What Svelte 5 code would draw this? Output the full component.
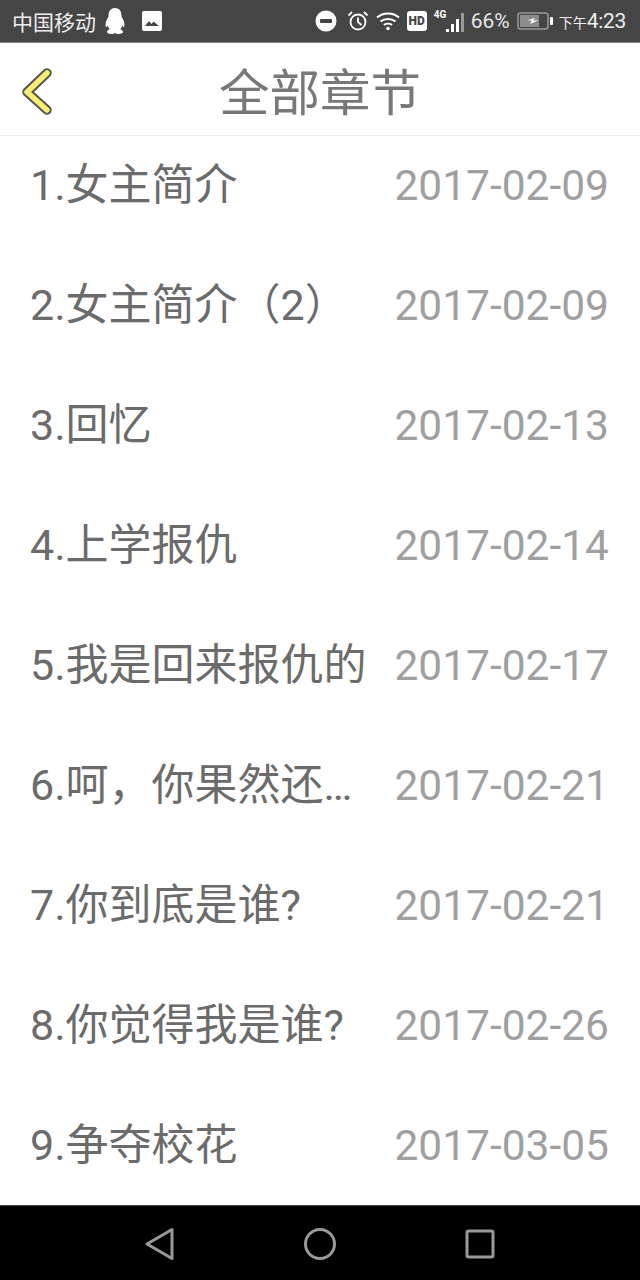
<script>
  const chapters = [
    ['1.女主简介', '2017-02-09'],
    ['2.女主简介（2）', '2017-02-09'],
    ['3.回忆', '2017-02-13'],
    ['4.上学报仇', '2017-02-14'],
    ['5.我是回来报仇的', '2017-02-17'],
    ['6.呵，你果然还…', '2017-02-21'],
    ['7.你到底是谁?', '2017-02-21'],
    ['8.你觉得我是谁?', '2017-02-26'],
    ['9.争夺校花', '2017-03-05']
  ];
</script>

<div class="screen">
  <header class="status">
    <div class="left">
      <span class="carrier">中国移动</span>
      <svg class="qq" width="24" height="28" viewBox="0 0 24 28">
        <path fill="#fff" d="M12 1C7 1 5.500 5 5.500 9.500 4 12 2.500 15 2.500 18c0 1.500.6 2.500 1.200 2 .4-.3.8-1 1-1.500.4 1.500 1 2.800 2 3.800-1.500.6-2.700 1.500-2.700 2.700C4 26.500 7 27 9 27c1.300 0 2.300-.5 3-1 .7.500 1.700 1 3 1 2 0 5-.5 5-2 0-1.200-1.200-2.100-2.700-2.700 1-1 1.600-2.300 2-3.800.2.500.6 1.200 1 1.500.6.500 1.200-.5 1.200-2 0-3-1.500-6-3-8.500C18.500 5 17 1 12 1z"/>
      </svg>
      <svg class="pic" width="22" height="22" viewBox="0 0 22 22">
        <rect x="1" y="1" width="20" height="20" rx="2" fill="#fff"/>
        <path fill="#444" d="M4 16l4-5 2.500 3 2-2.500L18 16z"/>
      </svg>
    </div>
    <div class="right">
      <svg width="22" height="22" viewBox="0 0 22 22"><circle cx="11" cy="11" r="10.500" fill="#fff"/><rect x="5" y="9" width="12" height="4" rx="1" fill="#444"/></svg>
      <svg class="alarm" width="22" height="22" viewBox="0 0 22 22" fill="none" stroke="#fff" stroke-width="1.800"><circle cx="11" cy="12" r="7.500"/><path d="M11 7.500V12l3.500 3M1.500 5.500L5 2M20.500 5.500L17 2"/></svg>
      <svg class="wifi" width="24" height="20" viewBox="0 0 24 20" fill="none" stroke="#fff" stroke-width="2"><path d="M1 6.500c6-5.500 16-5.500 22 0M4.500 10.500c4-3.500 11-3.500 15 0M8 14c2.200-1.700 5.800-1.700 8 0"/><circle cx="12" cy="17.500" r="1.800" fill="#fff" stroke="none"/></svg>
      <span class="hd">HD</span>
      <span class="signal">
        <span class="g4">4G</span>
        <svg width="20" height="21" viewBox="0 0 20 21"><rect x="1" y="17" width="3" height="3" fill="#fff"/><rect x="6" y="12" width="3" height="8" fill="#fff"/><rect x="11" y="7" width="3" height="13" fill="#fff"/><rect x="16" y="1" width="3" height="19" fill="#999"/></svg>
      </span>
      <span class="pct">66%</span>
      <svg class="batt" width="36" height="20" viewBox="0 0 36 20">
        <rect x="1" y="2" width="30" height="16" rx="2.500" fill="none" stroke="#999" stroke-width="1.500"/>
        <rect x="3" y="4" width="19" height="12" fill="#8c8c8c"/>
        <path fill="#fff" d="M10 9.500l8-2.500-2 2.500h5l-8 3.500 2-3.500z"/>
        <rect x="33" y="6" width="3" height="8" rx="1" fill="#fff"/>
      </svg>
      <span class="time"><small>下午</small>4:23</span>
    </div>
  </header>

  <nav class="bar">
    <svg class="back" width="40" height="52" viewBox="0 0 40 52">
      <path d="M30 8L10 27l20 18" fill="none" stroke="#555" stroke-width="9.500" stroke-linecap="round" stroke-linejoin="round"/>
      <path d="M30 8L10 27l20 18" fill="none" stroke="#f8ee70" stroke-width="5.500" stroke-linecap="round" stroke-linejoin="round"/>
    </svg>
    <h1>全部章节</h1>
  </nav>

  <ul class="list">
    {#each chapters as [title, date]}
      <li>
        <span class="name">{title}</span>
        <span class="date">{date}</span>
      </li>
    {/each}
  </ul>

  <footer class="nav">
    <svg width="30" height="34" viewBox="0 0 30 34" fill="none" stroke="#999" stroke-width="3" stroke-linejoin="round"><path d="M27 2.500v29L2 17z"/></svg>
    <svg width="34" height="34" viewBox="0 0 34 34" fill="none" stroke="#999" stroke-width="3"><circle cx="17" cy="17" r="14.500"/></svg>
    <svg width="30" height="30" viewBox="0 0 30 30" fill="none" stroke="#999" stroke-width="3" stroke-linejoin="round"><rect x="2" y="2" width="26" height="26" rx="1.500"/></svg>
  </footer>
</div>

<style>
  :global(body) { margin: 0; background: #fff; }
  .screen {
    width: 640px;
    height: 1280px;
    display: flex;
    flex-direction: column;
    overflow: hidden;
    font-family: Roboto, "Noto Sans CJK SC", sans-serif;
  }
  .status {
    height: 43px;
    flex: none;
    box-sizing: border-box;
    background: #454545;
    border-bottom: 1px solid #888;
    color: #eee;
    display: flex;
    justify-content: space-between;
    align-items: center;
    padding: 0 14px 0 12px;
  }
  .left, .right { display: flex; align-items: center; }
  .carrier { font-size: 21px; margin-right: 7px; }
  .qq { margin-right: 14px; }
  .alarm { margin-left: 10px; }
  .wifi { margin-left: 7px; }
  .hd {
    margin-left: 7px;
    background: #fff;
    color: #454545;
    font-size: 12px;
    font-weight: 900;
    width: 20px;
    height: 20px;
    border-radius: 3px;
    display: flex;
    align-items: center;
    justify-content: center;
  }
  .signal { display: flex; align-items: flex-end; margin-left: 7px; position: relative; width: 31px; height: 24px; justify-content: flex-end; }
  .g4 { position: absolute; left: 0; top: 0; font-size: 10px; font-weight: 700; color: #fff; }
  .pct { font-size: 21px; margin-left: 6px; color: #e6e6e6; }
  .batt { margin-left: 7px; }
  .time { font-size: 21px; letter-spacing: -0.3px; color: #eee; margin-left: 6px; white-space: nowrap; }
  .time small { font-size: 14px; letter-spacing: 0; }
  .bar {
    height: 93px;
    flex: none;
    box-sizing: border-box;
    background: #fff;
    border-bottom: 1px solid #eee;
    position: relative;
    display: flex;
    align-items: center;
    justify-content: center;
  }
  .back { position: absolute; left: 17px; top: 22px; }
  h1 {
    margin: 11px 0 0;
    font-size: 50.500px;
    font-weight: 400;
    color: #787878;
    line-height: 1;
  }
  .list {
    flex: 1;
    min-height: 0;
    margin: 0;
    padding: 0 31px 0 30px;
    list-style: none;
    overflow: hidden;
    background: #fff;
  }
  .list li {
    height: 120px;
    display: flex;
    align-items: center;
    justify-content: space-between;
    font-size: 42.500px;
  }
  .list li:first-child { margin-top: -11px; }
  .name { font-size: 43px; color: #6b6b6b; white-space: nowrap; margin-bottom: 8px; }
  .date { color: #a0a0a0; }
  .nav {
    height: 75px;
    flex: none;
    background: #000;
    box-sizing: border-box;
    border-top: 1px solid #444;
    display: flex;
    align-items: center;
    justify-content: center;
    gap: 128px;
    padding-top: 1px;
  }
</style>
